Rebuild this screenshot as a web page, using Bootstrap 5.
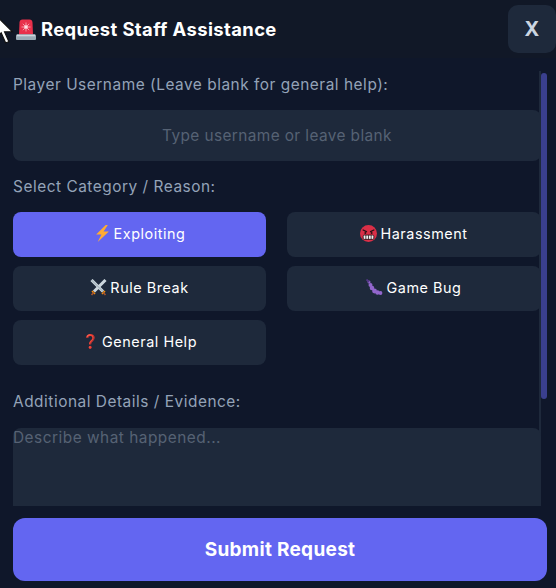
<!DOCTYPE html>
<html lang="en">
<head>
<meta charset="utf-8">
<title>Request Staff Assistance</title>
<link href="https://cdn.jsdelivr.net/npm/bootstrap@5.3.0/dist/css/bootstrap.min.css" rel="stylesheet">
<style>
html,body{height:100%;margin:0;overflow:hidden}
body{background:#0f172a;font-family:Inter,"Liberation Sans",sans-serif}
.shell{width:556px;height:588px;position:relative;background:#0f172a}
.head{height:58px;padding-left:16px;background:#111827}
.ttl{font-size:18.4px;font-weight:700;color:#fff;letter-spacing:.4px;margin:0;line-height:21px}
.closex{width:48px;height:48px;background:#1e293b;color:#cbd5e1;border:0;border-radius:10px;font-weight:700;font-size:20px;padding:0}
.closex:hover{background:#1e293b;color:#cbd5e1}
.bodyrow{height:435px;margin:13px 0 0 13px}
.scroller{width:528px;height:435px;padding-top:5px;overflow:hidden;background:linear-gradient(#1e293b,#1e293b) no-repeat right top/2px 100%}
.track{width:6px;padding-top:2px}
.thumb{height:326px;background:#3a3f8e;border-radius:3px}
.flab{display:block;font-size:15.4px;color:#94a3b8;letter-spacing:.53px;font-weight:400;line-height:18px;margin:0}
.gap17{margin-top:17px}.gap28{margin-top:28px}
.fin{height:51px;background:#1e293b;border:0;border-radius:8px;color:#fff;font-size:15.4px;letter-spacing:.4px}
.fin::placeholder{color:#566274;opacity:1}
.fin:focus{background:#1e293b;box-shadow:none;color:#fff}
.cats{display:grid;grid-template-columns:253px 254px;column-gap:21px;row-gap:9px}
.catb{height:45px;background:#1e293b;color:#fff;border:0;border-radius:8px;font-size:14.4px;font-weight:400;letter-spacing:.55px;padding:0 0 2px;gap:3px}
.catb.on{background:#6366f1}
.catb:hover{background:#1e293b;color:#fff}.catb.on:hover{background:#6366f1}
.emo{width:17px;height:17px;flex:none}
.emq{width:17px;font-size:13.5px;letter-spacing:0;line-height:17px;text-align:center}
.sirn{width:20px;height:21px;flex:none;margin-right:5px}
.ta{height:160px;background:#1e293b;border:0;border-radius:8px 8px 0 0;color:#fff;font-size:15.4px;letter-spacing:.5px;line-height:19px;padding:0;resize:none;display:block}
.ta::placeholder{color:#566274;opacity:1}
.sub{height:63px;width:534px;margin:12px 0 0 13px;background:#6366f1;color:#fff;font-size:19px;font-weight:700;letter-spacing:.3px;border:0;border-radius:12px;display:block;padding-top:8px}
.sub:hover{background:#6366f1;color:#fff}
.ptr{position:absolute;left:-6px;top:14px;width:21px;height:31px}
</style>
</head>
<body>
<div class="shell">
<div class="head d-flex align-items-center justify-content-between">
<h1 class="ttl d-flex align-items-center">
<svg class="sirn" viewBox="0 0 20 21" role="img" aria-label="siren"><path d="M3 15.500 3.500 3.500Q3.700 .5 6.500 .5h7q2.800 0 3 3l.5 12z" fill="#e8304a"/><path d="M10 3.500v9M5.500 8h9M6.800 4.800l6.400 6.400M13.200 4.800l-6.400 6.400" stroke="#f7a8b4" stroke-width=".9"/><circle cx="10" cy="8" r="1.800" fill="#fde0e4"/><rect x="0" y="15.500" width="20" height="5.500" rx="1" fill="#99aab5"/><rect x="1" y="15.500" width="18" height="1.800" fill="#ccd6dd"/></svg>
Request Staff Assistance</h1>
<button class="btn closex" type="button">X</button>
</div>
<div class="bodyrow d-flex">
<div class="scroller">
<label class="flab">Player Username (Leave blank for general help):</label>
<input class="form-control fin text-center mt-3" placeholder="Type username or leave blank">
<label class="flab gap17">Select Category / Reason:</label>
<div class="cats mt-3">
<button class="btn catb on d-inline-flex align-items-center justify-content-center" type="button"><svg class="emo" viewBox="0 0 16 16" role="img" aria-label="lightning"><path d="M11 0 2 9h5L3.500 16 14 6H9l4-6z" fill="#ffac33"/></svg>Exploiting</button>
<button class="btn catb d-inline-flex align-items-center justify-content-center" type="button"><svg class="emo" viewBox="0 0 16 16" role="img" aria-label="angry face"><circle cx="8" cy="8" r="8" fill="#da2f47"/><path d="M2.500 4.500 6.500 6.500M13.500 4.500 9.500 6.500" stroke="#2a1015" stroke-width="1.200"/><circle cx="5" cy="7.500" r=".9" fill="#2a1015"/><circle cx="11" cy="7.500" r=".9" fill="#2a1015"/><rect x="3" y="9.500" width="10" height="4" rx="1" fill="#f1f1f1" stroke="#2a1015" stroke-width=".8"/><path d="M5.500 9.500v4M8 9.500v4M10.500 9.500v4" stroke="#2a1015" stroke-width=".7"/></svg>Harassment</button>
<button class="btn catb d-inline-flex align-items-center justify-content-center" type="button"><svg class="emo" viewBox="0 0 17 17" role="img" aria-label="crossed swords"><path d="M1.500 1 13 12.500M15.500 1 4 12.500" stroke="#ccd6dd" stroke-width="3"/><path d="M1.500 1 13 12.500" stroke="#8899a6" stroke-width=".8"/><path d="M2 12l3 3M15 12l-3 3" stroke="#f4900c" stroke-width="1.600"/><path d="M3.800 13.500 1.500 16M13.200 13.500 15.500 16" stroke="#a0522d" stroke-width="1.800"/></svg>Rule Break</button>
<button class="btn catb d-inline-flex align-items-center justify-content-center" type="button"><svg class="emo" viewBox="0 0 17 17" role="img" aria-label="bug"><g fill="#9266cc"><circle cx="3" cy="3" r="1.500"/><circle cx="4.500" cy="6" r="2"/><circle cx="6" cy="9" r="2.300"/><circle cx="8.500" cy="12" r="2.400"/><circle cx="11.500" cy="13.500" r="2.300"/><circle cx="14.500" cy="14" r="1.900"/></g><path d="M.5 .5 3 3" stroke="#553788" stroke-width="1.800"/></svg>Game Bug</button>
<button class="btn catb d-inline-flex align-items-center justify-content-center" type="button"><span class="emq">❓</span>General Help</button>
</div>
<label class="flab gap28">Additional Details / Evidence:</label>
<textarea class="form-control ta gap17" placeholder="Describe what happened..."></textarea>
</div>
<div class="track"><div class="thumb"></div></div>
</div>
<button class="btn sub" type="button">Submit Request</button>
<svg class="ptr" viewBox="0 0 18 28" role="img" aria-label="pointer"><path d="M1 1v21l5-5 4 9 3-1-4-9h7z" fill="#fff" stroke="#111" stroke-width="1"/></svg>
</div>
</body>
</html>
